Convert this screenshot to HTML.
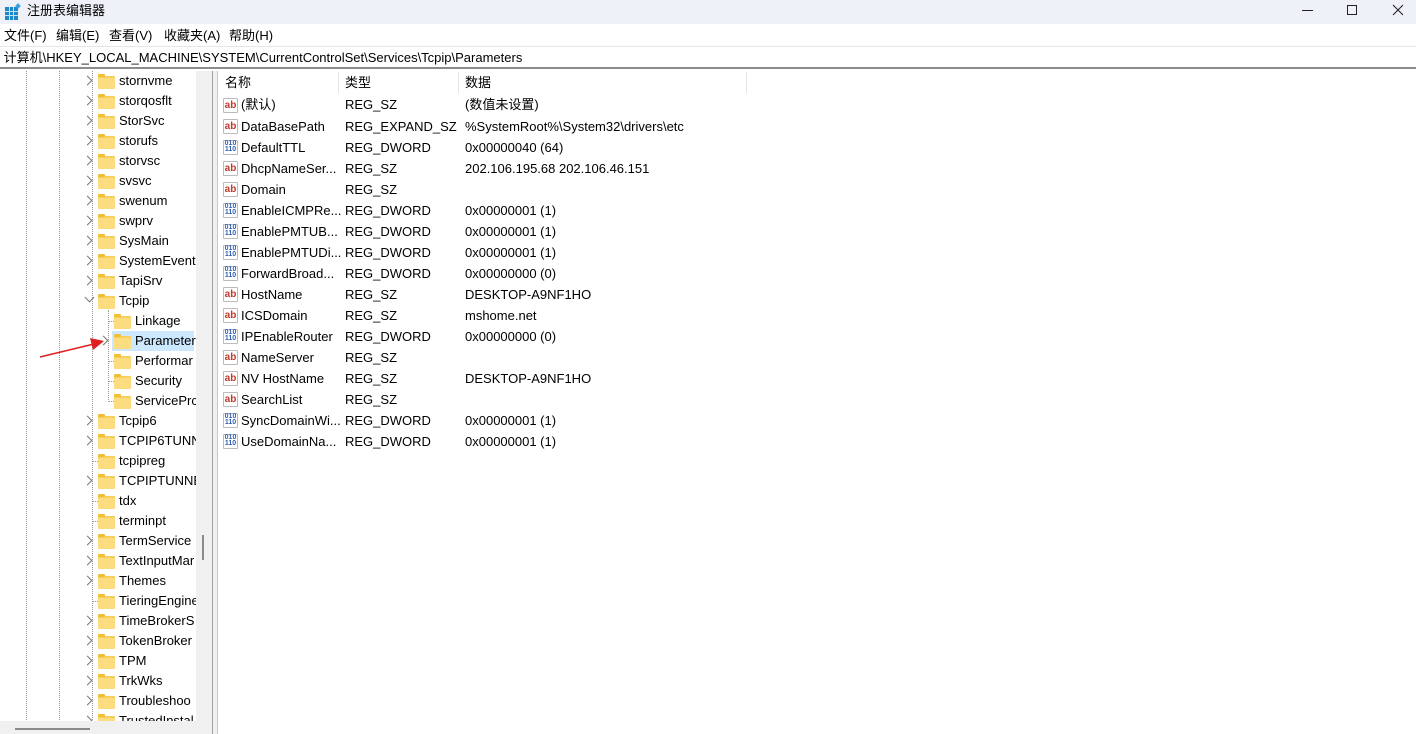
<!DOCTYPE html>
<html><head><meta charset="utf-8"><style>
*{margin:0;padding:0;box-sizing:border-box}
body{width:1416px;height:734px;overflow:hidden;background:#fff;font-family:"Liberation Sans","Noto Sans CJK SC",sans-serif;font-size:13px;color:#000;position:relative}
.a{position:absolute;white-space:nowrap;line-height:16px}
#title{left:0;top:0;width:1416px;height:24px;background:#eff1f8}
#menu{left:0;top:24px;width:1416px;height:22px;background:#fff}
#addr{left:0;top:46px;width:1416px;height:23px;background:#fff;border-top:1px solid #e6e6e6;border-bottom:2px solid #8c8c8c;line-height:21px}
#tree{left:0;top:71px;width:196px;height:663px;overflow:hidden;background:#fff}
.r{position:absolute;height:20px;line-height:20px;white-space:nowrap}
.f{position:absolute;width:17px;height:13px;background:#f7cf5a;border-radius:1px;top:5px}
.f:before{content:"";position:absolute;left:0;top:-2px;width:7px;height:3px;background:#eebe3c;border-radius:1px 1px 0 0}
.f:after{content:"";position:absolute;left:0;top:2px;width:17px;height:11px;background:#fbdc7f;border-radius:1px}
.ch{position:absolute;top:6px;width:7px;height:7px;border-right:1.3px solid #777;border-bottom:1.3px solid #777;transform:rotate(-45deg)}
.dn{transform:rotate(45deg);top:3px}
.dh{position:absolute;top:10px;height:1px;border-top:1px dotted #999}
.vl{position:absolute;width:1px;border-left:1px dotted #999}
.ic{position:absolute;left:223px;width:15px;height:15px;font-size:10px;font-weight:bold;line-height:13px;text-align:center;border:1px solid #bbb;border-radius:1px;background:#fff}
.ab{color:#c0392b}
.bn{color:#2f5fb3;font-size:7px;line-height:6px;letter-spacing:0}
#list{position:absolute;left:0;top:1px;width:1416px;height:600px}
</style></head><body>
<div class="a" id="title">
 <svg class="a" style="left:4px;top:3px" width="18" height="18" viewBox="0 0 18 18"><rect x="1" y="4" width="13" height="13" fill="#1e88c8"/><g stroke="#bfe3f7" stroke-width="1"><line x1="5.5" y1="4" x2="5.5" y2="17"/><line x1="9.5" y1="4" x2="9.5" y2="17"/><line x1="1" y1="8.5" x2="14" y2="8.5"/><line x1="1" y1="12.5" x2="14" y2="12.5"/></g><rect x="12" y="1" width="4" height="4" fill="#3aa0e0" transform="rotate(45 14 3)"/></svg>
 <span class="a" style="left:27px;top:3px;font-size:13px">注册表编辑器</span>
 <div class="a" style="left:1302px;top:10px;width:11px;height:1px;background:#222"></div>
 <div class="a" style="left:1347px;top:5px;width:10px;height:10px;border:1px solid #222"></div>
 <svg class="a" style="left:1392px;top:4px" width="12" height="12"><path d="M1 1L11 11M11 1L1 11" stroke="#222" stroke-width="1.1"/></svg>
</div>
<div class="a" id="menu">
 <span class="a" style="left:4px;top:4px">文件(F)</span>
 <span class="a" style="left:56px;top:4px">编辑(E)</span>
 <span class="a" style="left:109px;top:4px">查看(V)</span>
 <span class="a" style="left:164px;top:4px">收藏夹(A)</span>
 <span class="a" style="left:229px;top:4px">帮助(H)</span>
</div>
<div class="a" id="addr" style="line-height:21px">&nbsp;计算机\HKEY_LOCAL_MACHINE\SYSTEM\CurrentControlSet\Services\Tcpip\Parameters</div>

<div class="a" id="tree">
<div class="vl" style="left:26px;top:0;height:663px"></div>
<div class="vl" style="left:59px;top:0;height:663px"></div>
<div class="vl" style="left:92px;top:0;height:663px"></div>
<div class="vl" style="left:108px;top:239px;height:90px"></div>
<div class="r" style="left:112px;top:260px;width:82px;background:#cce8ff"></div>
<div class="r" style="top:0;left:0;width:196px"><i class="ch" style="left:84px"></i><i class="f" style="left:98px"></i><span style="position:absolute;left:119px">stornvme</span></div>
<div class="r" style="top:20px;left:0;width:196px"><i class="ch" style="left:84px"></i><i class="f" style="left:98px"></i><span style="position:absolute;left:119px">storqosflt</span></div>
<div class="r" style="top:40px;left:0;width:196px"><i class="ch" style="left:84px"></i><i class="f" style="left:98px"></i><span style="position:absolute;left:119px">StorSvc</span></div>
<div class="r" style="top:60px;left:0;width:196px"><i class="ch" style="left:84px"></i><i class="f" style="left:98px"></i><span style="position:absolute;left:119px">storufs</span></div>
<div class="r" style="top:80px;left:0;width:196px"><i class="ch" style="left:84px"></i><i class="f" style="left:98px"></i><span style="position:absolute;left:119px">storvsc</span></div>
<div class="r" style="top:100px;left:0;width:196px"><i class="ch" style="left:84px"></i><i class="f" style="left:98px"></i><span style="position:absolute;left:119px">svsvc</span></div>
<div class="r" style="top:120px;left:0;width:196px"><i class="ch" style="left:84px"></i><i class="f" style="left:98px"></i><span style="position:absolute;left:119px">swenum</span></div>
<div class="r" style="top:140px;left:0;width:196px"><i class="ch" style="left:84px"></i><i class="f" style="left:98px"></i><span style="position:absolute;left:119px">swprv</span></div>
<div class="r" style="top:160px;left:0;width:196px"><i class="ch" style="left:84px"></i><i class="f" style="left:98px"></i><span style="position:absolute;left:119px">SysMain</span></div>
<div class="r" style="top:180px;left:0;width:196px"><i class="ch" style="left:84px"></i><i class="f" style="left:98px"></i><span style="position:absolute;left:119px">SystemEvents</span></div>
<div class="r" style="top:200px;left:0;width:196px"><i class="ch" style="left:84px"></i><i class="f" style="left:98px"></i><span style="position:absolute;left:119px">TapiSrv</span></div>
<div class="r" style="top:220px;left:0;width:196px"><i class="ch dn" style="left:86px"></i><i class="f" style="left:98px"></i><span style="position:absolute;left:119px">Tcpip</span></div>
<div class="r" style="top:240px;left:0;width:196px"><i class="dh" style="left:108px;width:6px"></i><i class="f" style="left:114px"></i><span style="position:absolute;left:135px">Linkage</span></div>
<div class="r" style="top:260px;left:0;width:196px"><i class="ch" style="left:100px"></i><i class="f" style="left:114px"></i><span style="position:absolute;left:135px">Parameter</span></div>
<div class="r" style="top:280px;left:0;width:196px"><i class="dh" style="left:108px;width:6px"></i><i class="f" style="left:114px"></i><span style="position:absolute;left:135px">Performar</span></div>
<div class="r" style="top:300px;left:0;width:196px"><i class="dh" style="left:108px;width:6px"></i><i class="f" style="left:114px"></i><span style="position:absolute;left:135px">Security</span></div>
<div class="r" style="top:320px;left:0;width:196px"><i class="dh" style="left:108px;width:6px"></i><i class="f" style="left:114px"></i><span style="position:absolute;left:135px">ServicePrc</span></div>
<div class="r" style="top:340px;left:0;width:196px"><i class="ch" style="left:84px"></i><i class="f" style="left:98px"></i><span style="position:absolute;left:119px">Tcpip6</span></div>
<div class="r" style="top:360px;left:0;width:196px"><i class="ch" style="left:84px"></i><i class="f" style="left:98px"></i><span style="position:absolute;left:119px">TCPIP6TUNN</span></div>
<div class="r" style="top:380px;left:0;width:196px"><i class="dh" style="left:92px;width:6px"></i><i class="f" style="left:98px"></i><span style="position:absolute;left:119px">tcpipreg</span></div>
<div class="r" style="top:400px;left:0;width:196px"><i class="ch" style="left:84px"></i><i class="f" style="left:98px"></i><span style="position:absolute;left:119px">TCPIPTUNNE</span></div>
<div class="r" style="top:420px;left:0;width:196px"><i class="dh" style="left:92px;width:6px"></i><i class="f" style="left:98px"></i><span style="position:absolute;left:119px">tdx</span></div>
<div class="r" style="top:440px;left:0;width:196px"><i class="dh" style="left:92px;width:6px"></i><i class="f" style="left:98px"></i><span style="position:absolute;left:119px">terminpt</span></div>
<div class="r" style="top:460px;left:0;width:196px"><i class="ch" style="left:84px"></i><i class="f" style="left:98px"></i><span style="position:absolute;left:119px">TermService</span></div>
<div class="r" style="top:480px;left:0;width:196px"><i class="ch" style="left:84px"></i><i class="f" style="left:98px"></i><span style="position:absolute;left:119px">TextInputMar</span></div>
<div class="r" style="top:500px;left:0;width:196px"><i class="ch" style="left:84px"></i><i class="f" style="left:98px"></i><span style="position:absolute;left:119px">Themes</span></div>
<div class="r" style="top:520px;left:0;width:196px"><i class="dh" style="left:92px;width:6px"></i><i class="f" style="left:98px"></i><span style="position:absolute;left:119px">TieringEngine</span></div>
<div class="r" style="top:540px;left:0;width:196px"><i class="ch" style="left:84px"></i><i class="f" style="left:98px"></i><span style="position:absolute;left:119px">TimeBrokerS</span></div>
<div class="r" style="top:560px;left:0;width:196px"><i class="ch" style="left:84px"></i><i class="f" style="left:98px"></i><span style="position:absolute;left:119px">TokenBroker</span></div>
<div class="r" style="top:580px;left:0;width:196px"><i class="ch" style="left:84px"></i><i class="f" style="left:98px"></i><span style="position:absolute;left:119px">TPM</span></div>
<div class="r" style="top:600px;left:0;width:196px"><i class="ch" style="left:84px"></i><i class="f" style="left:98px"></i><span style="position:absolute;left:119px">TrkWks</span></div>
<div class="r" style="top:620px;left:0;width:196px"><i class="ch" style="left:84px"></i><i class="f" style="left:98px"></i><span style="position:absolute;left:119px">Troubleshoo</span></div>
<div class="r" style="top:640px;left:0;width:196px"><i class="ch" style="left:84px"></i><i class="f" style="left:98px"></i><span style="position:absolute;left:119px">TrustedInstal</span></div>
<div class="a" style="left:0;top:650px;width:196px;height:13px;background:#f0f0f0"></div>
<div class="a" style="left:15px;top:657px;width:75px;height:2px;background:#8a8a8a"></div>
</div>
<div class="a" style="left:196px;top:71px;width:16px;height:663px;background:#f0f0f0"></div>
<div class="a" style="left:202px;top:535px;width:2px;height:25px;background:#8a8a8a"></div>
<div class="a" style="left:212px;top:71px;width:1px;height:663px;background:#a0a0a0"></div>
<div class="a" style="left:213px;top:71px;width:4px;height:663px;background:#f0f0f0"></div>
<div class="a" style="left:217px;top:71px;width:1px;height:663px;background:#c8c8c8"></div>

<svg class="a" style="left:36px;top:334px" width="72" height="28"><line x1="4" y1="23" x2="58" y2="10" stroke="#e02020" stroke-width="1.5"/><path d="M68 7L54 4L57 16Z" fill="#e02020"/></svg>

<div id="list">
<div class="a" style="left:225px;top:74px">名称</div>
<div class="a" style="left:345px;top:74px">类型</div>
<div class="a" style="left:465px;top:74px">数据</div>
<div class="a" style="left:338px;top:71px;width:1px;height:21px;background:#e5e5e5"></div>
<div class="a" style="left:458px;top:71px;width:1px;height:21px;background:#e5e5e5"></div>
<div class="a" style="left:746px;top:71px;width:1px;height:21px;background:#e5e5e5"></div>

<div class="ic ab a" style="top:97px;line-height:13px">ab</div><div class="a" style="left:241px;top:96px">(默认)</div><div class="a" style="left:345px;top:96px">REG_SZ</div><div class="a" style="left:465px;top:96px">(数值未设置)</div>
<div class="ic ab a" style="top:118px;line-height:13px">ab</div><div class="a" style="left:241px;top:118px">DataBasePath</div><div class="a" style="left:345px;top:118px">REG_EXPAND_SZ</div><div class="a" style="left:465px;top:118px">%SystemRoot%\System32\drivers\etc</div>
<div class="ic bn a" style="top:139px;line-height:6px">010<br>110</div><div class="a" style="left:241px;top:139px">DefaultTTL</div><div class="a" style="left:345px;top:139px">REG_DWORD</div><div class="a" style="left:465px;top:139px">0x00000040 (64)</div>
<div class="ic ab a" style="top:160px;line-height:13px">ab</div><div class="a" style="left:241px;top:160px">DhcpNameSer...</div><div class="a" style="left:345px;top:160px">REG_SZ</div><div class="a" style="left:465px;top:160px">202.106.195.68 202.106.46.151</div>
<div class="ic ab a" style="top:181px;line-height:13px">ab</div><div class="a" style="left:241px;top:181px">Domain</div><div class="a" style="left:345px;top:181px">REG_SZ</div>
<div class="ic bn a" style="top:202px;line-height:6px">010<br>110</div><div class="a" style="left:241px;top:202px">EnableICMPRe...</div><div class="a" style="left:345px;top:202px">REG_DWORD</div><div class="a" style="left:465px;top:202px">0x00000001 (1)</div>
<div class="ic bn a" style="top:223px;line-height:6px">010<br>110</div><div class="a" style="left:241px;top:223px">EnablePMTUB...</div><div class="a" style="left:345px;top:223px">REG_DWORD</div><div class="a" style="left:465px;top:223px">0x00000001 (1)</div>
<div class="ic bn a" style="top:244px;line-height:6px">010<br>110</div><div class="a" style="left:241px;top:244px">EnablePMTUDi...</div><div class="a" style="left:345px;top:244px">REG_DWORD</div><div class="a" style="left:465px;top:244px">0x00000001 (1)</div>
<div class="ic bn a" style="top:265px;line-height:6px">010<br>110</div><div class="a" style="left:241px;top:265px">ForwardBroad...</div><div class="a" style="left:345px;top:265px">REG_DWORD</div><div class="a" style="left:465px;top:265px">0x00000000 (0)</div>
<div class="ic ab a" style="top:286px;line-height:13px">ab</div><div class="a" style="left:241px;top:286px">HostName</div><div class="a" style="left:345px;top:286px">REG_SZ</div><div class="a" style="left:465px;top:286px">DESKTOP-A9NF1HO</div>
<div class="ic ab a" style="top:307px;line-height:13px">ab</div><div class="a" style="left:241px;top:307px">ICSDomain</div><div class="a" style="left:345px;top:307px">REG_SZ</div><div class="a" style="left:465px;top:307px">mshome.net</div>
<div class="ic bn a" style="top:328px;line-height:6px">010<br>110</div><div class="a" style="left:241px;top:328px">IPEnableRouter</div><div class="a" style="left:345px;top:328px">REG_DWORD</div><div class="a" style="left:465px;top:328px">0x00000000 (0)</div>
<div class="ic ab a" style="top:349px;line-height:13px">ab</div><div class="a" style="left:241px;top:349px">NameServer</div><div class="a" style="left:345px;top:349px">REG_SZ</div>
<div class="ic ab a" style="top:370px;line-height:13px">ab</div><div class="a" style="left:241px;top:370px">NV HostName</div><div class="a" style="left:345px;top:370px">REG_SZ</div><div class="a" style="left:465px;top:370px">DESKTOP-A9NF1HO</div>
<div class="ic ab a" style="top:391px;line-height:13px">ab</div><div class="a" style="left:241px;top:391px">SearchList</div><div class="a" style="left:345px;top:391px">REG_SZ</div>
<div class="ic bn a" style="top:412px;line-height:6px">010<br>110</div><div class="a" style="left:241px;top:412px">SyncDomainWi...</div><div class="a" style="left:345px;top:412px">REG_DWORD</div><div class="a" style="left:465px;top:412px">0x00000001 (1)</div>
<div class="ic bn a" style="top:433px;line-height:6px">010<br>110</div><div class="a" style="left:241px;top:433px">UseDomainNa...</div><div class="a" style="left:345px;top:433px">REG_DWORD</div><div class="a" style="left:465px;top:433px">0x00000001 (1)</div>
</div>
</body></html>
